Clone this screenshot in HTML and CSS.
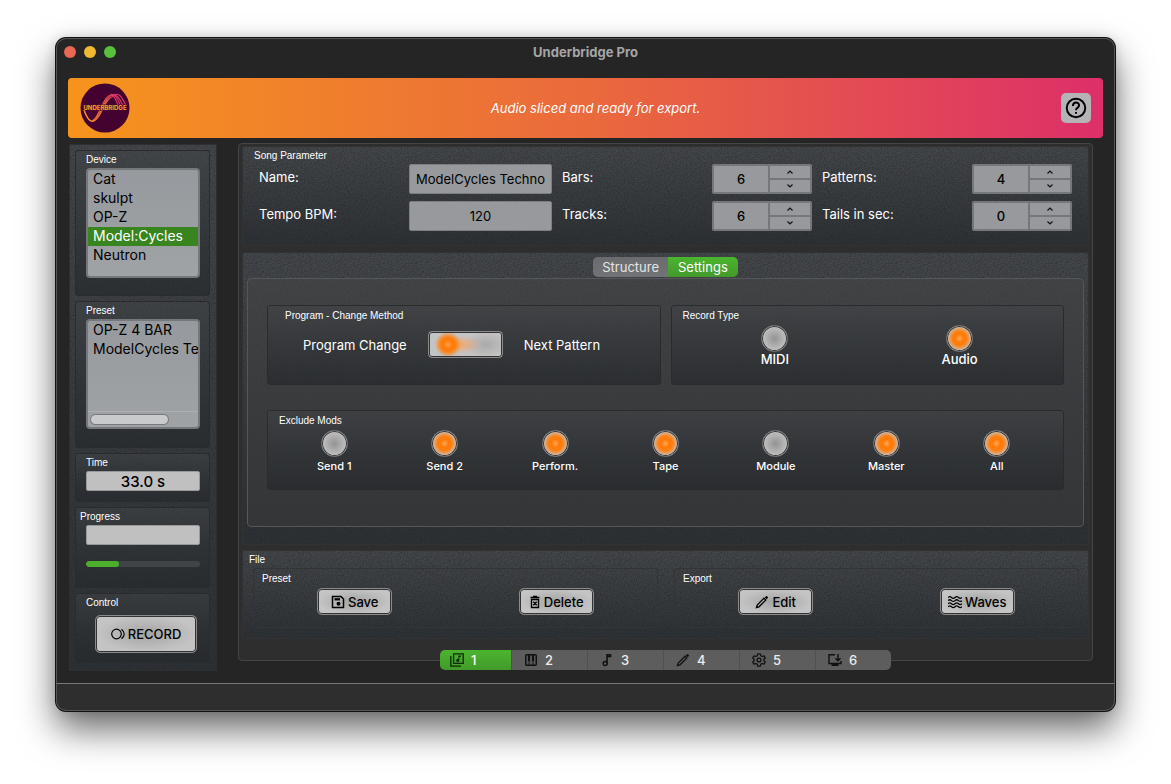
FILE: index.html
```html
<!DOCTYPE html>
<html lang="en">
<head>
<meta charset="utf-8">
<meta name="viewport" content="width=device-width, initial-scale=1">
<title>Underbridge Pro</title>
<link rel="stylesheet" href="styles.css">
</head>
<body>
<div class="window">
  <div class="titlebar">
    <div class="lights">
      <button class="light close" aria-label="Close"></button>
      <button class="light minimise" aria-label="Minimise"></button>
      <button class="light maximise" aria-label="Zoom"></button>
    </div>
    <h1 class="title">Underbridge Pro</h1>
  </div>

  <header class="banner">
    <svg class="logo" viewBox="0 0 50 50" role="img" aria-label="Underbridge logo">
      <defs>
        <linearGradient id="ribbon" x1="4" y1="0" x2="47" y2="0" gradientUnits="userSpaceOnUse">
          <stop offset="0" stop-color="#f5961e"/><stop offset=".45" stop-color="#e9653f"/><stop offset=".7" stop-color="#e03468"/><stop offset="1" stop-color="#e03468"/>
        </linearGradient>
      </defs>
      <circle cx="25" cy="25" r="24.5" fill="#43022f"/>
      <g fill="none" stroke="url(#ribbon)" stroke-width="1.100">
        <path d="M4 27C7 35 9 38 12 38C19 37 22 13 32 11.500"/>
        <path d="M4 27C7 36 10 39 13 38.500C21 36 23 14 33 12"/>
        <path d="M12 38.500C22 37 24 15 33 13.500"/>
        <path d="M31 11.500H37.500C42 12 43 18 46 22"/>
        <path d="M31 11.500C39 11 40 18 43 22"/>
        <path d="M31 12C37 11.500 38 18 40.500 22"/>
        <path d="M31 12.500C35 12 36 18 38 22"/>
      </g>
      <text x="25" y="27" text-anchor="middle" class="logo-text">UNDERBRIDGE</text>
    </svg>
    <p class="message">Audio sliced and ready for export.</p>
    <button class="help" aria-label="Help">
      <svg viewBox="0 0 20 20" width="22" height="22" fill="none" stroke="#000" stroke-width="1.8">
        <circle cx="10" cy="10" r="8.4"/>
        <path d="M7.2 8.2C7.2 4 12.8 4.2 12.8 7.6C12.8 9.8 10 9.8 10 12"/>
        <path d="M10 13.6V15.3"/>
      </svg>
    </button>
  </header>

  <div class="workspace">
    <aside class="sidebar textured">
      <section class="group device-group">
        <label class="caption" for="device">Device</label>
        <div class="listbox">
          <select id="device" class="list" size="5">
            <option>Cat</option><option>skulpt</option><option>OP-Z</option><option selected>Model:Cycles</option><option>Neutron</option>
          </select>
        </div>
      </section>
      <section class="group preset-group">
        <label class="caption" for="preset">Preset</label>
        <div class="listbox">
          <select id="preset" class="list" size="4">
            <option>OP-Z 4 BAR</option><option>ModelCycles Techno</option>
          </select>
          <div class="scrollbar"><div class="thumb"></div></div>
        </div>
      </section>
      <section class="group time-group">
        <label class="caption" for="time">Time</label>
        <input id="time" class="readout" value="33.0 s" readonly>
      </section>
      <section class="group progress-group">
        <label class="caption wide-caption" for="stage">Progress</label>
        <input id="stage" class="readout" readonly>
        <progress class="progress" value="29" max="100" aria-label="Progress"></progress>
      </section>
      <section class="group control-group">
        <h2 class="caption">Control</h2>
        <button class="push record">
          <svg viewBox="0 0 16 14" width="16" height="14" fill="none" stroke="#000" stroke-width="1.2"><circle cx="5.500" cy="7" r="4.800"/><path d="M10.500 2.200Q16 7 10.500 11.800"/></svg>
          RECORD
        </button>
      </section>
    </aside>

    <main class="main">
      <div class="frame">
        <section class="panel textured song">
          <h2 class="caption">Song Parameter</h2>
          <div class="params">
            <label for="name">Name:</label><input id="name" class="field" value="ModelCycles Techno">
            <label class="next" for="bars">Bars:</label>
            <div class="spin"><input id="bars" value="6"><button aria-label="More bars"><svg viewBox="0 0 8 6"><path d="M1.500 4.500L4 2L6.500 4.500"/></svg></button><button aria-label="Fewer bars"><svg viewBox="0 0 8 6"><path d="M1.500 1.500L4 4L6.500 1.500"/></svg></button></div>
            <label class="next" for="patterns">Patterns:</label>
            <div class="spin"><input id="patterns" value="4"><button aria-label="More patterns"><svg viewBox="0 0 8 6"><path d="M1.500 4.500L4 2L6.500 4.500"/></svg></button><button aria-label="Fewer patterns"><svg viewBox="0 0 8 6"><path d="M1.500 1.500L4 4L6.500 1.500"/></svg></button></div>
            <label for="tempo">Tempo BPM:</label><input id="tempo" class="field" value="120">
            <label class="next" for="tracks">Tracks:</label>
            <div class="spin"><input id="tracks" value="6"><button aria-label="More tracks"><svg viewBox="0 0 8 6"><path d="M1.500 4.500L4 2L6.500 4.500"/></svg></button><button aria-label="Fewer tracks"><svg viewBox="0 0 8 6"><path d="M1.500 1.500L4 4L6.500 1.500"/></svg></button></div>
            <label class="next" for="tails">Tails in sec:</label>
            <div class="spin"><input id="tails" value="0"><button aria-label="Longer tails"><svg viewBox="0 0 8 6"><path d="M1.500 4.500L4 2L6.500 4.500"/></svg></button><button aria-label="Shorter tails"><svg viewBox="0 0 8 6"><path d="M1.500 1.500L4 4L6.500 1.500"/></svg></button></div>
          </div>
        </section>

        <section class="panel textured settings">
          <div class="tabs">
            <button class="tab">Structure</button><button class="tab active">Settings</button>
          </div>
          <div class="pane">
            <div class="pair">
              <section class="group method">
                <h2 class="caption">Program - Change Method</h2>
                <div class="method-row">
                  <label for="method">Program Change</label>
                  <input id="method" type="checkbox" class="switch">
                  <span>Next Pattern</span>
                </div>
              </section>
              <section class="group choices">
                <h2 class="caption">Record Type</h2>
                <div class="knobs large">
                  <label><input type="radio" name="type" class="knob">MIDI</label>
                  <label><input type="radio" name="type" class="knob" checked>Audio</label>
                </div>
              </section>
            </div>
            <section class="group choices">
              <h2 class="caption">Exclude Mods</h2>
              <div class="knobs">
                <label><input type="checkbox" class="knob">Send 1</label>
                <label><input type="checkbox" class="knob" checked>Send 2</label>
                <label><input type="checkbox" class="knob" checked>Perform.</label>
                <label><input type="checkbox" class="knob" checked>Tape</label>
                <label><input type="checkbox" class="knob">Module</label>
                <label><input type="checkbox" class="knob" checked>Master</label>
                <label><input type="checkbox" class="knob" checked>All</label>
              </div>
            </section>
          </div>
        </section>

        <section class="panel textured file">
          <h2 class="caption">File</h2>
          <div class="file-row">
            <section class="outline">
              <h3 class="caption">Preset</h3>
              <div class="actions">
                <button class="push"><svg viewBox="0 0 14 14" width="14" height="14"><path fill="none" stroke="#000" stroke-width="1.5" d="M1.500 1.500H10L12.500 4V12.500H1.500Z"/><path d="M3.500 3.200H9V5.400H3.500Z"/><circle cx="7.500" cy="8.800" r="2"/></svg>Save</button>
                <button class="push"><svg viewBox="0 0 12 14" width="12" height="14" fill="none" stroke="#000" stroke-width="1.400"><path d="M1.500 2.500H10.500M4 1.400H8M2.500 4.500V12.500H9.500V4.500ZM4.300 6.700L7.700 10.300M7.700 6.700L4.300 10.300"/></svg>Delete</button>
              </div>
            </section>
            <section class="outline">
              <h3 class="caption">Export</h3>
              <div class="actions">
                <button class="push"><svg viewBox="0 0 14 14" width="14" height="14"><path fill="none" stroke="#000" stroke-width="1.300" d="M1.500 12.500L2.200 10L9 3.200L10.800 5L4 11.800Z"/><path d="M9.800 2.400L11 1.200Q11.500.8 12 1.200L12.800 2Q13.200 2.500 12.800 3L11.600 4.200Z"/></svg>Edit</button>
                <button class="push"><svg viewBox="0 0 14 14" width="14" height="14" fill="none" stroke="#000" stroke-width="1.200"><path d="M0 2.500Q1.750.8 3.500 2.500T7 2.500T10.500 2.500T14 2.500M0 5.600Q1.750 3.900 3.500 5.600T7 5.600T10.500 5.600T14 5.600M0 8.700Q1.750 7 3.500 8.700T7 8.700T10.500 8.700T14 8.700M0 11.800Q1.750 10.100 3.500 11.800T7 11.800T10.500 11.800T14 11.800"/></svg>Waves</button>
              </div>
            </section>
          </div>
        </section>
      </div>

      <nav class="pages" aria-label="Pages">
        <button class="page active"><svg viewBox="0 0 14 14" width="14" height="14"><path fill="none" stroke="#0c2a05" stroke-width="1.300" d="M3.600.8H13.200V10.400H3.600ZM.8 3V13.200H11"/><path fill="#0c2a05" d="M8.400 2.400H11V4H9.400V7.400A1.600 1.600 0 1 1 8.400 6Z"/></svg>1</button>
        <button class="page"><svg viewBox="0 0 14 14" width="14" height="14"><rect x="1.700" y="1.700" width="10.600" height="10.600" rx="1" fill="#555" stroke="#111" stroke-width="1.400"/><path fill="#111" d="M4 2H6V8H4ZM8 2H10V8H8ZM4.600 8H5.400V12H4.600ZM8.600 8H9.400V12H8.600Z"/></svg>2</button>
        <button class="page"><svg viewBox="0 0 14 14" width="14" height="14"><path fill="none" stroke="#111" stroke-width="1.600" d="M7 10.200V1.800H10.500V3.500H7"/><circle cx="5.200" cy="10.500" r="2" fill="none" stroke="#111" stroke-width="1.500"/></svg>3</button>
        <button class="page"><svg viewBox="0 0 14 14" width="14" height="14"><path fill="none" stroke="#111" stroke-width="1.300" d="M1.500 12.500L2.200 10L9 3.200L10.800 5L4 11.800Z"/><path fill="#111" d="M9.800 2.400L11 1.200Q11.500.8 12 1.200L12.800 2Q13.200 2.500 12.800 3L11.600 4.200Z"/></svg>4</button>
        <button class="page"><svg viewBox="0 0 14 14" width="14" height="14" fill="none" stroke="#111" stroke-width="1.300"><path stroke-linejoin="round" d="M5.700.8H8.300L8.700 2.700L10.200 3.500L12 2.800L13.300 5.100L11.900 6.300V7.700L13.300 8.900L12 11.200L10.200 10.500L8.700 11.300L8.300 13.200H5.700L5.300 11.300L3.800 10.500L2 11.200L.7 8.900L2.100 7.700V6.300L.7 5.100L2 2.800L3.800 3.500L5.300 2.700Z"/><circle cx="7" cy="7" r="1.900"/></svg>5</button>
        <button class="page"><svg viewBox="0 0 14 14" width="14" height="14" fill="none" stroke="#111" stroke-width="1.400"><path d="M7 1.700H1V10.500H13V8M10 1V7.500M7.500 5.200L10 7.700L12.500 5.200"/><path stroke-width="2" d="M3.500 12H10.500"/></svg>6</button>
      </nav>
    </main>
  </div>

  <footer class="statusbar"></footer>
</div>
</body>
</html>
```
FILE: styles.css
```css
* { box-sizing: border-box; }

body {
  margin: 0;
  padding: 38px 56px 73px;
  background: #fff;
  color: #fff;
  font-family: Inter, "Liberation Sans", sans-serif;
  font-size: 13px;
  font-weight: 400;
}

button, input, select { font: inherit; color: inherit; margin: 0; padding: 0; border: 0; }
h1, h2, h3, p { margin: 0; }
svg { display: block; flex: none; }

.window {
  border-radius: 10px;
  background: #252525;
  box-shadow: inset 0 0 0 1px #555, 0 0 0 1px #111, 0 18px 36px rgba(0, 0, 0, .6), 0 0 12px rgba(0, 0, 0, .15);
  overflow: hidden;
}

/* Title bar */
.titlebar {
  display: grid;
  grid-template-columns: 1fr auto 1fr;
  align-items: center;
  height: 28px;
  padding: 0 8px;
}
.lights { display: flex; gap: 8px; }
.light { width: 12px; height: 12px; border-radius: 50%; }
.close { background: #eb6653; }
.minimise { background: #f1b932; }
.maximise { background: #5abf3c; }
.title { color: #a5a5a5; font-size: 13px; font-weight: 700; line-height: 26px; }

/* Banner */
.banner {
  display: grid;
  grid-template-columns: 50px 1fr 30px;
  align-items: center;
  height: 60px;
  margin: 12px 12px 0;
  padding: 0 12px;
  border-radius: 4px;
  background: linear-gradient(90deg, #f6941d, #ea6a3c 50%, #dd2f69);
}
.logo { width: 50px; height: 50px; }
.logo-text { fill: #f3992a; stroke: #43022f; stroke-width: 1px; paint-order: stroke; font-size: 6px; font-weight: 800; }
.message { text-align: center; font-style: italic; }
.help {
  display: grid;
  place-items: center;
  width: 30px;
  height: 30px;
  border-radius: 5px;
  background: #b5b3b6;
}

/* Layout */
.workspace { display: flex; gap: 21px; align-items: flex-start; padding: 5px 22px 12px 13px; }
.sidebar {
  display: flex;
  flex-direction: column;
  gap: 5px;
  width: 148px;
  margin-top: 1px;
  padding: 5px 6px 7px 5px;
  border: 1px solid #2d2f30;
  background-color: #36393b;
}
.main { flex: 1; min-width: 0; }
.frame { padding: 2px 3px 21px; border: 1px solid #454545; border-radius: 4px; background: #2e2e2e; }

.textured {
  background-image:
    url("data:image/svg+xml,%3Csvg xmlns='http://www.w3.org/2000/svg' width='160' height='160'%3E%3Cfilter id='n' x='0' y='0' width='1' height='1' color-interpolation-filters='sRGB'%3E%3CfeTurbulence type='fractalNoise' baseFrequency='.7' numOctaves='2' stitchTiles='stitch'/%3E%3CfeColorMatrix values='0 0 0 0 .14 0 0 0 0 .13 0 0 0 0 .12 0 0 0 1.1 -.4'/%3E%3C/filter%3E%3Crect width='160' height='160' filter='url(%23n)'/%3E%3C/svg%3E"),
    linear-gradient(#44484c, #2c3135);
}

.caption { display: block; font-family: "Liberation Sans", sans-serif; font-size: 10px; font-weight: 400; line-height: 12px; }

.group {
  border: 1px solid #292b2d;
  border-radius: 3px;
  background: linear-gradient(rgba(66, 69, 72, .5), rgba(46, 50, 53, .5) 50%, rgba(37, 40, 44, .7));
}

/* Sidebar */
.sidebar .group { padding: 3px 9px 0 10px; }
.device-group { height: 146px; }
.preset-group { height: 147px; }
.time-group { height: 49px; }
.progress-group { height: 81px; }
.control-group { height: 70px; }
.sidebar .wide-caption { margin-left: -6px; }

.listbox {
  display: flex;
  flex-direction: column;
  height: 110px;
  margin-top: 2px;
  border: 2px solid #75777a;
  border-radius: 4px;
  background: linear-gradient(#96999d, #a0a3a6);
  overflow: hidden;
}
.list {
  flex: 1;
  min-height: 0;
  width: 100%;
  background: none;
  color: #000;
  font-size: 14px;
  overflow: hidden;
  outline: 0;
}
.list option { height: 19px; min-height: 19px; padding: 0 5px; line-height: 19px; color: #000; }
.list option:checked { background: #388520 linear-gradient(#388520, #388520); color: #fff; }
.scrollbar { padding: 3px; border-top: 1px solid #adafb1; }
.thumb { width: 74%; height: 9px; border-radius: 5px; background: #c9cacc; box-shadow: 0 0 0 1px #77797b; }

.readout {
  display: block;
  width: 100%;
  height: 20px;
  margin-top: 2px;
  border: 1px solid #98999a;
  border-radius: 2px;
  background: #c0c0c0;
  color: #000;
  font-size: 15px;
  font-weight: 500;
  text-align: center;
}
.progress {
  appearance: none;
  display: block;
  width: 100%;
  height: 6px;
  margin-top: 16px;
  border: 0;
  border-radius: 3px;
  background: #414446;
  overflow: hidden;
}
.progress::-webkit-progress-bar { background: #414446; }
.progress::-webkit-progress-value { border-radius: 3px; background: #4cb02d; }

.push {
  display: flex;
  align-items: center;
  justify-content: center;
  gap: 3px;
  width: 75px;
  height: 27px;
  border: 1px solid #8a8a8a;
  border-radius: 5px;
  background: radial-gradient(closest-side, #a4a4a4, #c4c4c4);
  box-shadow: inset 0 0 0 1px #333;
  color: #000;
  font-weight: 500;
  white-space: nowrap;
}
.record { width: 102px; height: 38px; margin: 6px 0 0 9px; gap: 1px; }

/* Song parameters */
.panel { border: 1px solid #303234; border-radius: 2px; }
.song { height: 100px; padding: 3px 16px 0 11px; }
.params {
  display: grid;
  grid-template-columns: 150fr 143px 160fr 100px 160fr 100px;
  gap: 7px 0;
  align-items: center;
  margin: 2px 0 0 5px;
}
.params label { padding-bottom: 4px; }
.params .next { padding-left: 10px; }
.field {
  width: 100%;
  height: 30px;
  border: 1px solid #7c7e80;
  border-radius: 2px;
  background: #97999d;
  color: #000;
  text-align: center;
}
.spin {
  display: grid;
  grid-template: 1fr 1fr / 1fr 40px;
  gap: 2px;
  height: 30px;
  padding: 2px;
  border-radius: 2px;
  background: #75777a;
  color: #000;
}
.spin input { grid-row: 1 / 3; width: 100%; min-width: 0; background: #97999d; font-weight: 500; text-align: center; }
.spin button { display: grid; place-items: center; background: #97999d; }
.spin svg { width: 8px; height: 6px; fill: none; stroke: #111; stroke-width: 1.2; }

/* Settings */
.settings { margin-top: 6px; padding: 4px 4px 17px; }
.tabs { display: flex; justify-content: center; height: 21px; padding-bottom: 1px; }
.tab { padding: 0 9px; background: linear-gradient(#6a6b6f, #727377); color: #e4e4e4; border-radius: 5px 0 0 5px; }
.tab.active { padding: 0 10px; background: linear-gradient(#4bb52e, #44992b); color: #fff; border-radius: 0 5px 5px 0; }
.pane {
  padding: 26px 19px 36px;
  border: 1px solid #55585a;
  border-radius: 4px;
  background: linear-gradient(rgba(68, 68, 70, .6), rgba(54, 55, 57, .8));
}
.pair { display: grid; grid-template-columns: 1fr 1fr; gap: 10px; margin-bottom: 25px; }
.pane .group { height: 80px; }
.method { padding: 4px 17px; }
.method-row { display: flex; align-items: center; gap: 21px; margin: 9px 0 0 18px; }
.switch {
  appearance: none;
  width: 75px;
  height: 27px;
  border: 1px solid #8a8a8a;
  border-radius: 4px;
  background:
    radial-gradient(circle at 19px 50%, #ffa04c 0, #ff7d0c 4px, #ff7d0c 7px, rgba(255, 125, 12, 0) 13px),
    radial-gradient(ellipse 24px 9px at 28px 50%, rgba(255, 160, 80, .9), rgba(255, 170, 100, 0)),
    radial-gradient(ellipse 22px 13px at 57px 50%, #aaa, #c4c4c4);
  box-shadow: inset 0 0 0 1px #333;
}
.choices { padding: 4px 11px; }
.knobs { display: grid; grid-auto-flow: column; grid-auto-columns: 1fr; margin-top: 3px; font-size: 11px; font-weight: 500; line-height: 14px; }
.knobs label { display: flex; flex-direction: column; align-items: center; gap: 2px; }
.knobs.large { font-size: 13px; }
.knobs.large label { gap: 0; }
.knob {
  appearance: none;
  width: 27px;
  height: 27px;
  border: 1px solid #77797b;
  border-radius: 50%;
  background: radial-gradient(circle, #939393, #c0c0c0 12px);
  box-shadow: inset 0 0 0 1px #333;
}
.knob:checked { background: radial-gradient(circle, #ffa75a 0, #ff7b08 4px, #ff7d0c 7px, #c8beb6 12px); }

/* File */
.file { height: 89px; margin-top: 5px; padding: 3px 9px 0 6px; }
.file-row { display: grid; grid-template-columns: 1fr 1fr; gap: 16px; margin: 2px 0 0 4px; }
.outline { height: 60px; padding-top: 4px; border: 1px solid #323435; border-radius: 3px; }
.outline .caption { margin-left: 8px; }
.actions { display: grid; grid-template-columns: 1fr 1fr; justify-items: center; margin-top: 3px; }

/* Page selector sits across the frame's lower edge */
.pages { position: relative; display: flex; width: max-content; margin: -11px auto 0; border-radius: 5px; overflow: hidden; }
.page {
  display: flex;
  align-items: center;
  gap: 7px;
  width: 76px;
  height: 20px;
  padding-left: 12px;
  border-left: 1px solid #505050;
  background: #5d5d5d;
  color: #ececec;
  font-weight: 500;
}
.page.active { width: 71px; padding-left: 10px; border: 0; background: linear-gradient(#4bb52e, #429a2a); color: #fff; }

.statusbar {
  height: 28px;
  border: 1px solid #555;
  border-top-color: #777;
  border-radius: 0 0 10px 10px;
  background: #2e2e2e;
}
```
